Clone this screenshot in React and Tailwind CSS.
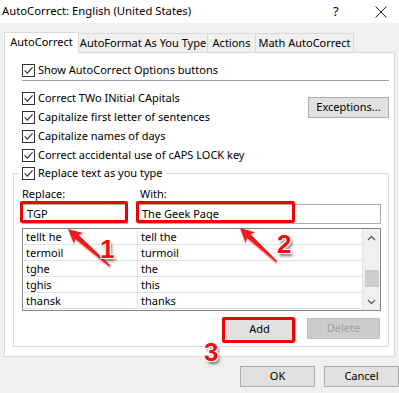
import React from "react";

const FONT = { fontFamily: '"Noto Sans", "Open Sans", sans-serif' };

const ENTRIES = [
  ["tellt he", "tell the"],
  ["termoil", "turmoil"],
  ["tghe", "the"],
  ["tghis", "this"],
  ["thansk", "thanks"],
];

function CheckBox() {
  return (
    <span className="w-[13px] h-[13px] border border-[#333333] bg-white flex items-center justify-center shrink-0">
      <svg width="11" height="11" viewBox="0 0 11 11">
        <path d="M1.6 5.4 L4.3 8.1 L9.6 2.4" fill="none" stroke="#333333" strokeWidth="1.2" />
      </svg>
    </span>
  );
}

function Row({ children }) {
  return (
    <div className="h-[19px] flex items-center gap-[3px]">
      <CheckBox />
      <span className="whitespace-nowrap">{children}</span>
    </div>
  );
}

function WinButton({ children, className = "", disabled = false }) {
  return (
    <div
      className={`h-[21px] flex items-center justify-center border ${
        disabled ? "bg-[#cccccc] border-[#bfbfbf] text-[#a0a0a0]" : "bg-[#e1e1e1] border-[#adadad] text-black"
      } ${className}`}
    >
      {children}
    </div>
  );
}

function Chevron({ up }) {
  return (
    <svg width="9" height="6" viewBox="0 0 9 6">
      <path d={up ? "M1 5 L4.5 1.5 L8 5" : "M1 1 L4.5 4.5 L8 1"} fill="none" stroke="#606060" strokeWidth="1.4" />
    </svg>
  );
}

// red callout arrow, tip at (x, y), pointing back along `angle`
function Arrow({ x, y, angle, length }) {
  const L = length;
  const pts = `0,0 14,-7 12,-2.6 ${L},-0.8 ${L},0.8 12,2.6 14,7`;
  return (
    <g transform={`translate(${x} ${y}) rotate(${angle})`}>
      <polygon points={pts} fill="#ee1c1c" transform="translate(1.5 1.5)" opacity="0.25" />
      <polygon points={pts} fill="#ee1c1c" />
    </g>
  );
}

function Num({ children, className }) {
  return (
    <span
      className={`absolute text-[26px] font-bold leading-none text-[#f01010] [text-shadow:1px_1px_0_#fff,-1px_-1px_0_#fff,1px_-1px_0_#fff,-1px_1px_0_#fff,2px_3px_3px_rgba(0,0,0,0.55)] ${className}`}
      style={{ fontFamily: '"Liberation Sans", Arial, sans-serif' }}
    >
      {children}
    </span>
  );
}

export default function App() {
  return (
    <div className="relative w-[399px] h-[393px] bg-[#f0f0f0] overflow-hidden text-[11px] text-black" style={FONT}>
      {/* Title bar */}
      <div className="h-[23px] bg-white flex items-center">
        <span className="pl-[2px] flex-1 whitespace-nowrap text-[11.3px]">AutoCorrect: English (United States)</span>
        <span className="w-[10px] text-[13px] mr-[32px]">?</span>
        <svg width="12" height="12" viewBox="0 0 12 12" className="mr-[12px]">
          <path d="M0.5 0.5 L11.5 11.5 M11.5 0.5 L0.5 11.5" stroke="#222" strokeWidth="1" />
        </svg>
      </div>

      {/* Tabs */}
      <div className="mt-[9px] h-[20px] flex items-end pl-[4px]">
        <div className="relative z-10 -mb-px h-[21px] w-[75px] bg-white border-x border-t border-[#d9d9d9] flex items-center justify-center pb-[2px]">
          AutoCorrect
        </div>
        <div className="h-[19px] w-[129px] border-t border-r border-[#d9d9d9] flex items-center justify-center whitespace-nowrap">
          AutoFormat As You Type
        </div>
        <div className="h-[19px] w-[48px] border-t border-r border-[#d9d9d9] flex items-center justify-center">
          Actions
        </div>
        <div className="h-[19px] w-[98px] border-t border-r border-[#d9d9d9] flex items-center justify-center whitespace-nowrap">
          Math AutoCorrect
        </div>
      </div>

      {/* Panel */}
      <div className="ml-[4px] w-[391px] h-[305px] bg-white border border-[#d9d9d9] pt-[8px]">
        <div className="pl-[17px]">
          <Row>Show AutoCorrect Options buttons</Row>
        </div>
        <div className="ml-[17px] w-[367px] h-px bg-[#a0a0a0]" />

        <div className="flex mt-[8px]">
          <div className="flex-1 pl-[17px]">
            <Row>Correct TWo INitial CApitals</Row>
            <Row>Capitalize first letter of sentences</Row>
            <Row>Capitalize names of days</Row>
            <Row>Correct accidental use of cAPS LOCK key</Row>
          </div>
          <WinButton className="mt-[8px] mr-[5px] w-[81px]">Exceptions...</WinButton>
        </div>

        <fieldset className="-mt-px ml-[8px] mr-[5px] h-[183px] border border-[#dcdcdc]">
          <legend className="ml-[6px] pl-[2px] pr-[3px]">
            <span className="h-[19px] flex items-center gap-[3px]">
              <CheckBox />
              <span className="whitespace-nowrap">Replace text as you type</span>
            </span>
          </legend>

          <div className="pl-[8px] pr-[7px]">
            <div className="mt-[3px] h-[16px] flex items-center">
              <span className="w-[118px]">Replace:</span>
              <span>With:</span>
            </div>
            <div className="mt-[2px] flex gap-[10px]">
              <div className="w-[106px] h-[20px] border border-[#adadad] flex items-center pl-[4px]">TGP</div>
              <div className="flex-1 h-[20px] border border-[#adadad] flex items-center pl-[3px]">The Geek Page</div>
            </div>

            <div className="mt-[4px] h-[83px] border border-[#828790] flex overflow-hidden">
              <div className="flex-1">
                {ENTRIES.map(([a, b]) => (
                  <div key={a} className="h-[16px] flex border-b border-[#e3e3e3]">
                    <span className="w-[115px] border-r border-[#e3e3e3] pl-[3px] leading-[15px]">{a}</span>
                    <span className="pl-[3px] leading-[15px]">{b}</span>
                  </div>
                ))}
              </div>
              <div className="w-[18px] bg-[#f0f0f0] border-l border-[#e3e3e3] flex flex-col items-center">
                <div className="h-[17px] flex items-center justify-center">
                  <Chevron up />
                </div>
                <div className="mt-[24px] w-[14px] h-[17px] bg-[#cdcdcd]" />
                <div className="mt-auto h-[17px] flex items-center justify-center">
                  <Chevron />
                </div>
              </div>
            </div>

            <div className="mt-[7px] flex justify-end gap-[11px] pr-[1px]">
              <WinButton className="w-[73px] h-[23px]">Add</WinButton>
              <WinButton disabled className="w-[73px]">Delete</WinButton>
            </div>
          </div>
        </fieldset>
      </div>

      {/* Dialog buttons */}
      <div className="mt-[9px] flex justify-end gap-[9px]">
        <WinButton className="w-[75px]">OK</WinButton>
        <WinButton className="w-[75px]">Cancel</WinButton>
      </div>

      {/* Annotations */}
      <div className="absolute left-[20px] top-[201px] w-[108px] h-[22px] border-[3px] border-[#f00000] rounded-[2px]" />
      <div className="absolute left-[136px] top-[201px] w-[159px] h-[22px] border-[3px] border-[#f00000] rounded-[2px]" />
      <div className="absolute left-[222px] top-[317px] w-[73px] h-[26px] border-[3px] border-[#f00000] rounded-[2px]" />

      <svg className="absolute left-0 top-0 pointer-events-none" width="399" height="393">
        <Arrow x={68} y={229} angle={41.4} length={56} />
        <Arrow x={240} y={228} angle={42.6} length={50} />
      </svg>

      <Num className="left-[100px] top-[236px]">1</Num>
      <Num className="left-[277px] top-[231px]">2</Num>
      <Num className="left-[204px] top-[339px]">3</Num>
    </div>
  );
}
